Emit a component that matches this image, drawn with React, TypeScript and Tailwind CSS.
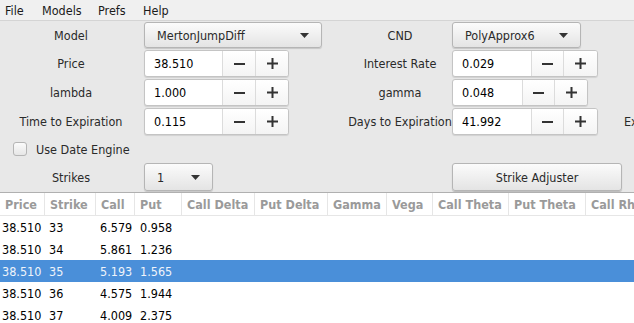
import React from "react";

const font = { fontFamily: '"DejaVu Sans Condensed", "DejaVu Sans", Tahoma, sans-serif' };

function Arrow() {
  return (
    <svg width="9" height="5" viewBox="0 0 9 5" className="shrink-0">
      <path d="M0 0 L9 0 L4.5 5 Z" fill="#333" />
    </svg>
  );
}

function Combo({ text, w }: { text: string; w: string }) {
  return (
    <div
      className={`${w} h-full flex items-center justify-between pl-[12px] pr-[12px] rounded-[3px] border border-[#b5b5b5] bg-gradient-to-b from-[#fbfbfb] to-[#e4e4e4] shadow-[0_1px_1px_rgba(0,0,0,0.15)] text-[#2a2a2a]`}
    >
      <span className="pt-[2px]">{text}</span>
      <Arrow />
    </div>
  );
}

function Minus() {
  return <div className="w-[11px] h-[2px] bg-[#333]" />;
}
function Plus() {
  return (
    <svg width="11" height="11" viewBox="0 0 11 11">
      <rect x="0" y="4.5" width="11" height="2" fill="#333" />
      <rect x="4.5" y="0" width="2" height="11" fill="#333" />
    </svg>
  );
}

function Spinner({ value, tw, bw1, bw2 }: { value: string; tw: string; bw1: string; bw2: string }) {
  return (
    <div className="h-full flex rounded-[3px] border border-[#c4c4c4] bg-white overflow-hidden shadow-[0_1px_1px_rgba(0,0,0,0.1)] self-start">
      <div className={`${tw} flex items-center pl-[9px] pt-[2px] text-black`}>{value}</div>
      <div className={`${bw1} flex items-center justify-center border-l border-[#dcdcdc] bg-gradient-to-b from-white to-[#f4f4f4]`}>
        <Minus />
      </div>
      <div className={`${bw2} flex items-center justify-center border-l border-[#dcdcdc] bg-gradient-to-b from-white to-[#f4f4f4]`}>
        <Plus />
      </div>
    </div>
  );
}

const cols: { name: string; w: string }[] = [
  { name: "Price", w: "w-[45px]" },
  { name: "Strike", w: "w-[51px]" },
  { name: "Call", w: "w-[39px]" },
  { name: "Put", w: "w-[47px]" },
  { name: "Call Delta", w: "w-[73px]" },
  { name: "Put Delta", w: "w-[73px]" },
  { name: "Gamma", w: "w-[59px]" },
  { name: "Vega", w: "w-[46px]" },
  { name: "Call Theta", w: "w-[76px]" },
  { name: "Put Theta", w: "w-[77px]" },
  { name: "Call Rho", w: "w-[80px]" },
];

const rows = [
  ["38.510", "33", "6.579", "0.958"],
  ["38.510", "34", "5.861", "1.236"],
  ["38.510", "35", "5.193", "1.565"],
  ["38.510", "36", "4.575", "1.944"],
  ["38.510", "37", "4.009", "2.375"],
];

const lbl = "flex items-center justify-center pt-[2px] whitespace-nowrap";

export default function App() {
  return (
    <div className="w-[634px] h-[323px] overflow-hidden bg-[#e8e8e8] text-[12.5px] flex flex-col" style={font}>
      {/* menu bar */}
      <div className="h-[21px] shrink-0 flex items-center pt-[2px] bg-[#f0f0f0] border-b border-[#d4d4d4] text-[#1a1a1a] pl-[5px]">
        <span className="w-[37px]">File</span>
        <span className="w-[56px]">Models</span>
        <span className="w-[45px]">Prefs</span>
        <span>Help</span>
      </div>

      {/* form */}
      <div className="grid grid-cols-[142px_2px_204px_104px_1fr] grid-rows-[26px_27px_27px_27px_24px_28px] gap-y-[2px] pt-[1px] text-[#2a2a2a] shrink-0">
        {/* row 1 */}
        <div className={lbl}>Model</div>
        <div />
        <div className="flex">
          <Combo text="MertonJumpDiff" w="w-[178px]" />
        </div>
        <div className={lbl}>CND</div>
        <div className="flex">
          <Combo text="PolyApprox6" w="w-[129px]" />
        </div>

        {/* row 2 */}
        <div className={lbl}>Price</div>
        <div />
        <div className="flex">
          <Spinner value="38.510" tw="w-[77px]" bw1="w-[33px]" bw2="w-[33px]" />
        </div>
        <div className={lbl}>Interest Rate</div>
        <div className="flex">
          <Spinner value="0.029" tw="w-[78px]" bw1="w-[32px]" bw2="w-[34px]" />
        </div>

        {/* row 3 */}
        <div className={lbl}>lambda</div>
        <div />
        <div className="flex">
          <Spinner value="1.000" tw="w-[77px]" bw1="w-[33px]" bw2="w-[33px]" />
        </div>
        <div className={lbl}>gamma</div>
        <div className="flex">
          <Spinner value="0.048" tw="w-[69px]" bw1="w-[32px]" bw2="w-[33px]" />
        </div>

        {/* row 4 */}
        <div className={lbl}>Time to Expiration</div>
        <div />
        <div className="flex">
          <Spinner value="0.115" tw="w-[77px]" bw1="w-[33px]" bw2="w-[33px]" />
        </div>
        <div className={lbl}>Days to Expiration</div>
        <div className="flex items-center">
          <Spinner value="41.992" tw="w-[78px]" bw1="w-[32px]" bw2="w-[34px]" />
          <span className="ml-[26px] pt-[2px] whitespace-nowrap">Expiration Date</span>
        </div>

        {/* row 5 */}
        <div className="col-span-5 flex items-center pl-[13px] gap-[9px]">
          <div className="w-[14px] h-[14px] rounded-[3px] border border-[#b5b5b5] bg-gradient-to-b from-[#fbfbfb] to-[#e6e6e6]" />
          <span className="pt-[2px]">Use Date Engine</span>
        </div>

        {/* row 6 */}
        <div className={lbl}>Strikes</div>
        <div />
        <div className="flex">
          <Combo text="1" w="w-[69px]" />
        </div>
        <div />
        <div className="flex">
          <div className="w-[170px] h-full flex items-center justify-center pt-[2px] rounded-[3px] border border-[#b5b5b5] bg-gradient-to-b from-[#fbfbfb] to-[#e4e4e4] shadow-[0_1px_1px_rgba(0,0,0,0.2)] text-[#2a2a2a]">
            Strike Adjuster
          </div>
        </div>
      </div>

      {/* table */}
      <div className="mt-[1px] flex-1 bg-white border-t border-[#b0b0b0] overflow-hidden">
        <div className="flex h-[23px] border-b border-[#e6e6e6] bg-white">
          {cols.map((c) => (
            <div
              key={c.name}
              className={`${c.w} shrink-0 flex items-center pl-[5px] pt-[2px] font-bold text-[#9a9a9a] border-r border-[#e6e6e6] whitespace-nowrap overflow-hidden`}
            >
              {c.name}
            </div>
          ))}
        </div>
        {rows.map((r, i) => (
          <div
            key={i}
            className={`flex h-[22px] items-center pt-[2px] ${i === 2 ? "bg-[#4a8fd9] text-[#f0f4fa]" : "text-black"}`}
          >
            <div className="w-[45px] shrink-0 pl-[2px]">{r[0]}</div>
            <div className="w-[51px] shrink-0 pl-[4px]">{r[1]}</div>
            <div className="w-[39px] shrink-0 pl-[4px]">{r[2]}</div>
            <div className="w-[47px] shrink-0 pl-[5px]">{r[3]}</div>
          </div>
        ))}
      </div>
    </div>
  );
}
